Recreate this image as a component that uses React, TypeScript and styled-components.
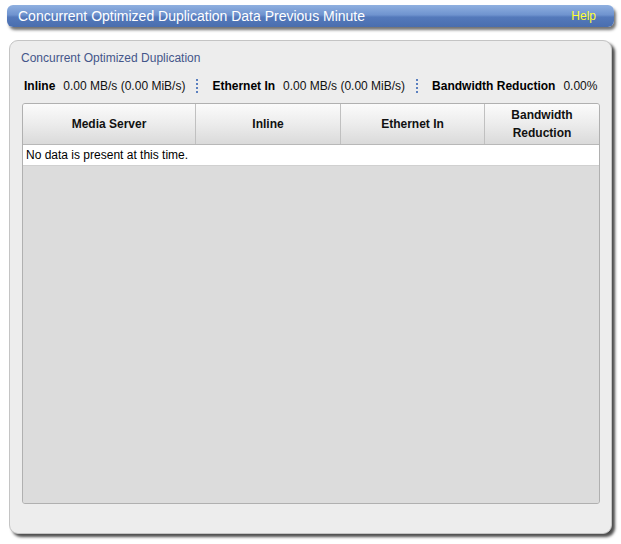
import styled, { createGlobalStyle } from 'styled-components';

const GlobalStyle = createGlobalStyle`
  html, body {
    margin: 0;
    padding: 0;
    background: #fff;
    font-family: "Liberation Sans", Arial, sans-serif;
  }
`;

const columns = [
  { label: 'Media Server', width: 172 },
  { label: 'Inline', width: 145 },
  { label: 'Ethernet In', width: 144 },
  { label: 'Bandwidth Reduction', width: 116 },
];

const stats = [
  { label: 'Inline', value: '0.00 MB/s (0.00 MiB/s)' },
  { label: 'Ethernet In', value: '0.00 MB/s (0.00 MiB/s)' },
  { label: 'Bandwidth Reduction', value: '0.00%' },
];

const App = () => {
  return (
    <Page>
      <GlobalStyle />
      <TitleBar>
        <Title>Concurrent Optimized Duplication Data Previous Minute</Title>
        <HelpLink>Help</HelpLink>
      </TitleBar>
      <Panel>
        <SectionLabel>Concurrent Optimized Duplication</SectionLabel>
        <StatsRow>
          {stats.map((s, i) => (
            <Stat key={s.label}>
              {i > 0 && <Separator />}
              <StatLabel>{s.label}</StatLabel>
              <StatValue>{s.value}</StatValue>
            </Stat>
          ))}
        </StatsRow>
        <TableBox>
          <HeaderRow>
            {columns.map((c, i) => (
              <HeaderCell key={c.label} $width={c.width} $first={i === 0}>
                {c.label === 'Bandwidth Reduction' ? (
                  <>Bandwidth<br />Reduction</>
                ) : (
                  c.label
                )}
              </HeaderCell>
            ))}
          </HeaderRow>
          <EmptyRow>No data is present at this time.</EmptyRow>
          <Filler />
        </TableBox>
      </Panel>
    </Page>
  );
};

export default App;

const Page = styled.div`
  width: 621px;
  height: 544px;
  padding: 5px 0 0 7px;
  box-sizing: border-box;
  display: flex;
  flex-direction: column;
`;

const TitleBar = styled.div`
  width: 607px;
  height: 22px;
  box-sizing: border-box;
  padding: 0 18px 0 11px;
  display: flex;
  align-items: center;
  justify-content: space-between;
  border-radius: 6px;
  background: linear-gradient(180deg, #8fb0e0 0%, #6f93cf 45%, #5479bb 55%, #4a6eae 100%);
  box-shadow: 2px 3px 3px rgba(0, 0, 0, 0.55);
`;

const Title = styled.div`
  color: #fff;
  font-size: 14px;
  line-height: 22px;
`;

const HelpLink = styled.a`
  color: #ffff33;
  font-size: 12px;
  cursor: pointer;
`;

const Panel = styled.div`
  margin: 13px 0 0 2px;
  width: 603px;
  height: 494px;
  box-sizing: border-box;
  background: #ededed;
  border: 1px solid #c4c4c4;
  border-radius: 9px;
  box-shadow: 3px 3px 3px rgba(0, 0, 0, 0.7);
  padding: 10px 11px 29px 12px;
  display: flex;
  flex-direction: column;
`;

const SectionLabel = styled.div`
  color: #44568a;
  font-size: 12px;
  line-height: 14px;
  margin-left: -1px;
`;

const StatsRow = styled.div`
  display: flex;
  align-items: center;
  margin: 14px 0 0 2px;
  height: 14px;
  white-space: nowrap;
`;

const Stat = styled.div`
  display: flex;
  align-items: center;
  flex-shrink: 0;
  font-size: 12px;
  color: #000;
`;

const StatLabel = styled.span`
  font-weight: bold;
  margin-right: 8px;
`;

const StatValue = styled.span`
  color: #111;
`;

const Separator = styled.span`
  display: inline-block;
  width: 2px;
  height: 14px;
  margin: 0 14px 0 11px;
  background: repeating-linear-gradient(180deg, #5b80c0 0 2px, transparent 2px 4px);
`;

const TableBox = styled.div`
  margin-top: 10px;
  flex: 1;
  display: flex;
  flex-direction: column;
  border: 1px solid #b0b0b0;
  border-radius: 3px;
  background: #dcdcdc;
  overflow: hidden;
`;

const HeaderRow = styled.div`
  display: flex;
  height: 40px;
  background: linear-gradient(180deg, #fbfbfb 0%, #ececec 50%, #dadada 100%);
  border-bottom: 1px solid #b8b8b8;
`;

const HeaderCell = styled.div<{ $width: number; $first: boolean }>`
  width: ${(p) => p.$width}px;
  flex: ${(p) => (p.$width === 116 ? 1 : 'none')};
  box-sizing: border-box;
  border-left: ${(p) => (p.$first ? 'none' : '1px solid #c0c0c0')};
  display: flex;
  align-items: center;
  justify-content: center;
  text-align: center;
  font-size: 12px;
  font-weight: bold;
  line-height: 18px;
  color: #111;
`;

const EmptyRow = styled.div`
  height: 20px;
  background: #fff;
  border-bottom: 1px solid #d0d0d0;
  font-size: 12px;
  line-height: 20px;
  padding-left: 3px;
  color: #000;
`;

const Filler = styled.div`
  flex: 1;
  background: #dcdcdc;
`;
